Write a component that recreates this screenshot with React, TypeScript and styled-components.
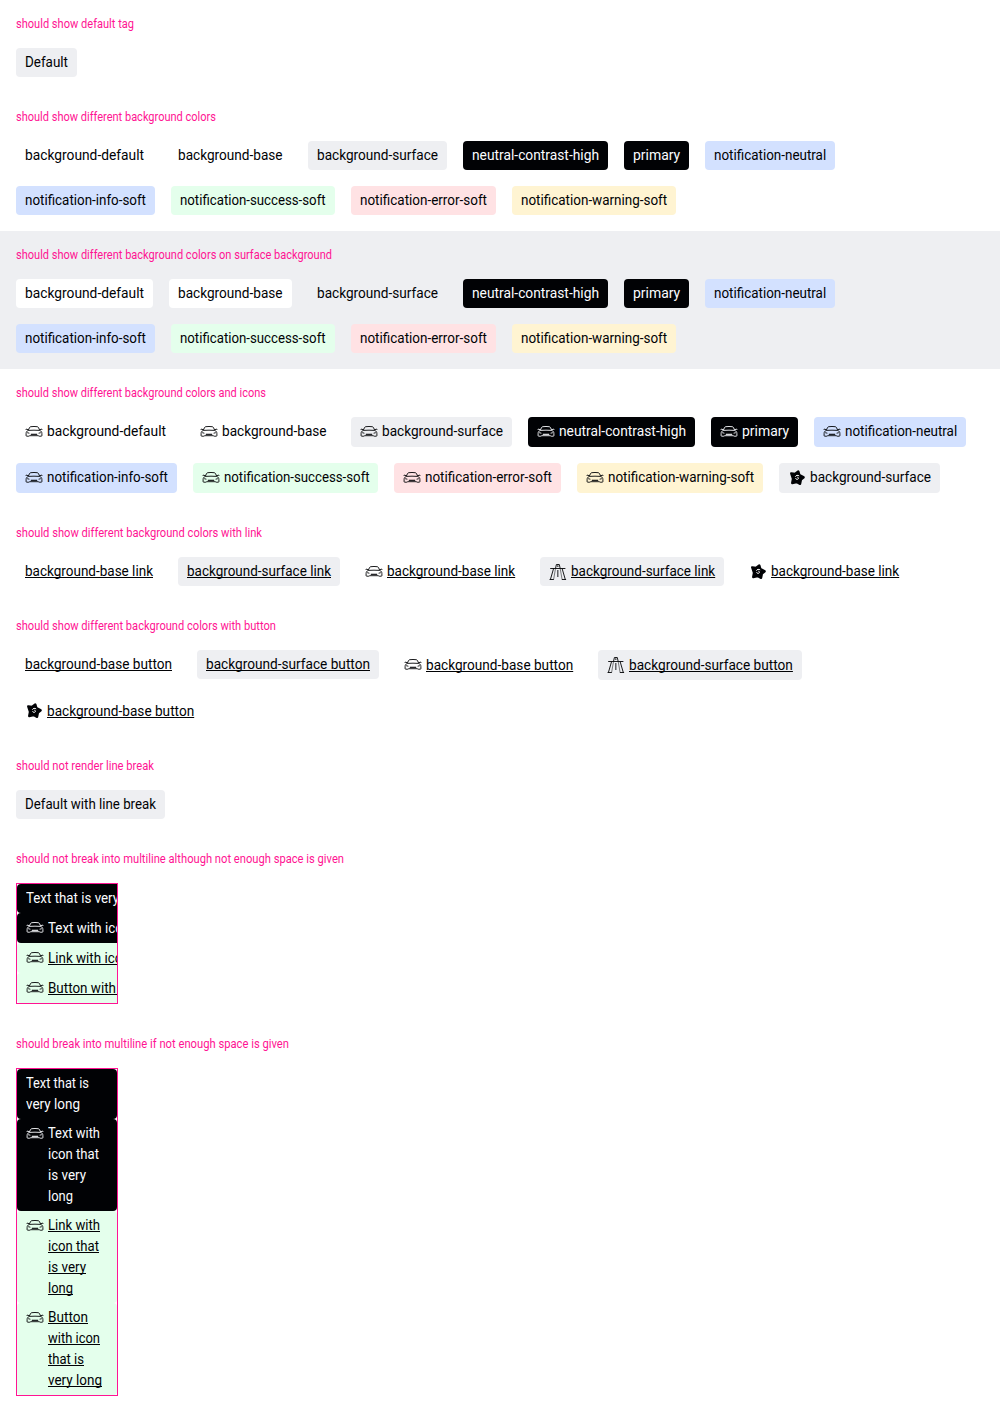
import React, { useLayoutEffect, useRef, useState } from 'react';
import styled, { createGlobalStyle, css } from 'styled-components';

const GlobalStyle = createGlobalStyle`
  body { margin: 0; background: #fff; color: #010205; font-family: Roboto, 'Liberation Sans', sans-serif; }
`;

type Color = 'default' | 'base' | 'surface' | 'dark' | 'info' | 'success' | 'error' | 'warning';

const colors: Record<Color, string> = {
  default: '#ffffff',
  base: '#ffffff',
  surface: '#eeeff2',
  dark: '#010205',
  info: '#d3e1ff',
  success: '#e4ffec',
  error: '#ffe2e4',
  warning: '#fff4d2',
};

const Section = styled.section<{ $surface?: boolean }>`
  display: flex;
  flex-direction: column;
  gap: 16px;
  padding: 16px;
  background: ${(p) => (p.$surface ? colors.surface : 'transparent')};
`;

const Heading = styled.h2`
  margin: 0;
  height: 16px;
  font-size: 13px;
  font-weight: 400;
  line-height: 16px;
  color: #ff1493;
`;

const Row = styled.div`
  display: flex;
  flex-wrap: wrap;
  align-items: flex-start;
  gap: 16px;
`;

type Fit = 'slim' | 'tall' | 'low';

const paddings: Record<Fit, string> = {
  slim: '4px 9px',
  tall: '4px 9px 5px',
  low: '5px 9px 4px',
};

const IconSvg = styled.svg`
  flex: none;
  width: 18px;
  height: 18px;
  margin-top: 2px;
`;

const TagBox = styled.span<{ $color: Color; $fit: Fit }>`
  display: flex;
  align-items: flex-start;
  gap: 3.8px;
  flex: none;
  box-sizing: border-box;
  padding: ${(p) => paddings[p.$fit]};
  border-radius: 4px;
  background: ${(p) => colors[p.$color]};
  color: ${(p) => (p.$color === 'dark' ? '#fbfcff' : '#010205')};
  font-size: 15px;
  line-height: 21px;

  ${IconSvg} {
    margin-top: ${(p) => (p.$fit === 'low' ? 1 : 2)}px;
  }
`;

const Lines = styled.span`
  display: flex;
  flex-direction: column;
`;

const Slot = styled.span`
  display: block;
  white-space: nowrap;
`;

const Glyphs = styled.span<{ $underline?: boolean }>`
  display: inline-block;
  vertical-align: top;
  transform-origin: 0 0;
  ${(p) =>
    p.$underline &&
    css`
      text-decoration: underline;
      text-decoration-thickness: 1px;
      text-decoration-skip-ink: none;
      text-underline-offset: 1px;
    `}
`;

const Frame = styled.div<{ $clip?: boolean }>`
  display: flex;
  flex-direction: column;
  align-items: ${(p) => (p.$clip ? 'flex-start' : 'stretch')};
  width: 100px;
  border: 1px solid #ff1493;
  overflow: hidden;
`;

function Condensed({ text, width, underline }: { text: string; width: number; underline?: boolean }) {
  const ref = useRef<HTMLSpanElement>(null);
  const [scale, setScale] = useState(1);
  useLayoutEffect(() => {
    if (ref.current) setScale(width / parseFloat(getComputedStyle(ref.current).width));
  }, [text, width]);
  return (
    <Slot style={{ width }}>
      <Glyphs ref={ref} $underline={underline} style={{ transform: `scaleX(${scale})` }}>
        {text}
      </Glyphs>
    </Slot>
  );
}

function Car() {
  return (
    <IconSvg viewBox="0 0 18 18" fill="none" stroke="currentColor" strokeWidth=".9">
      <path d="M3.2 7.5 4.5 4.6C4.8 4 5.200 3.800 5.800 3.700 7.800 3.400 10.200 3.400 12.200 3.700c.6.1 1 .3 1.300.9l1.300 2.900" />
      <path d="M.8 7c0-.6.3-.9.9-.8l1.700.6M17.200 7c0-.6-.3-.9-.9-.8l-1.700.6" />
      <path d="M3.400 7.400c3.500-.3 7.700-.3 11.200 0" />
      <path d="M3.300 7.400C1.800 8.100 1.100 9 1.100 10.600v1.900c0 .5.2.7.7.7h2l1-.5h8.400l1 .5h2c.5 0 .7-.2.7-.7v-1.900c0-1.600-.7-2.500-2.200-3.200" />
      <path d="M2.200 9.700l2.200.5M15.800 9.700l-2.200.5" />
      <path d="M5.800 11.300h6.400" strokeWidth="1.100" />
    </IconSvg>
  );
}

function Highway() {
  return (
    <IconSvg viewBox="0 0 18 18" fill="none" stroke="currentColor" strokeWidth=".9">
      <path d="M1.200 5.500h15.200M6.500 5.500l.9-4h2.900l.9 4M8.850 2.200v1.800" />
      <path d="M4.600 5.500 1.400 16.500M13.100 5.500l3.200 11" />
      <path d="M6.500 5.500 4.600 16.500M11.200 5.500l1.900 11" strokeWidth=".5" />
      <path d="M.6 16.500h4.200M12.900 16.500h4.200" />
      <path d="M8.850 7v7" />
    </IconSvg>
  );
}

function Flower() {
  return (
    <IconSvg viewBox="0 0 18 18" fill="currentColor">
      <path
        d="M3.200 4.300 7 5 10.300 2.400 11.400 6 15.700 8.300 12.900 10.700 12.100 14.900 8.600 13.100 4.200 14 5 9.800Z"
        stroke="currentColor"
        strokeWidth="2.300"
        strokeLinejoin="round"
      />
      <path d="M11.200 6.900c-1.400-1-3.200-.6-3.900.8" fill="none" stroke="#fff" strokeWidth="1" />
      <path d="M7.600 9.200c.3 1.300 1.800 1.600 2.600.7.600-.9.200-1.600-.8-1.700" fill="none" stroke="#fff" strokeWidth="1" />
    </IconSvg>
  );
}

type IconName = 'car' | 'highway' | 'flower';
const icons = { car: Car, highway: Highway, flower: Flower };

interface TagProps {
  color?: Color;
  icon?: IconName;
  underline?: boolean;
  fit?: Fit;
  lines: [string, number][];
}

function Tag({ color = 'surface', icon, underline, fit = 'slim', lines }: TagProps) {
  const Icon = icon && icons[icon];
  return (
    <TagBox $color={color} $fit={fit}>
      {Icon && <Icon />}
      <Lines>
        {lines.map(([text, width]) => (
          <Condensed key={text} text={text} width={width} underline={underline} />
        ))}
      </Lines>
    </TagBox>
  );
}

function Story({ title, width, surface, children }: { title: string; width: number; surface?: boolean; children: React.ReactNode }) {
  return (
    <Section $surface={surface}>
      <Heading>
        <Condensed text={title} width={width} />
      </Heading>
      {children}
    </Section>
  );
}

const palette: { color: Color; text: string; width: number }[] = [
  { color: 'default', text: 'background-default', width: 119 },
  { color: 'base', text: 'background-base', width: 104.6 },
  { color: 'surface', text: 'background-surface', width: 121 },
  { color: 'dark', text: 'neutral-contrast-high', width: 127 },
  { color: 'dark', text: 'primary', width: 47.2 },
  { color: 'info', text: 'notification-neutral', width: 112.2 },
  { color: 'info', text: 'notification-info-soft', width: 121 },
  { color: 'success', text: 'notification-success-soft', width: 145.6 },
  { color: 'error', text: 'notification-error-soft', width: 127 },
  { color: 'warning', text: 'notification-warning-soft', width: 146.2 },
];

const Palette = ({ icon }: { icon?: IconName }) => (
  <>
    {palette.map((p) => (
      <Tag key={p.text} color={p.color} icon={icon} fit={icon ? 'tall' : 'slim'} lines={[[p.text, p.width]]} />
    ))}
  </>
);

export default function App() {
  return (
    <>
      <GlobalStyle />
      <main>
        <Story title="should show default tag" width={118}>
          <Row>
            <Tag lines={[['Default', 43]]} />
          </Row>
        </Story>
        <Story title="should show different background colors" width={200}>
          <Row>
            <Palette />
          </Row>
        </Story>
        <Story title="should show different background colors on surface background" width={316} surface>
          <Row>
            <Palette />
          </Row>
        </Story>
        <Story title="should show different background colors and icons" width={250}>
          <Row>
            <Palette icon="car" />
            <Tag icon="flower" fit="tall" lines={[['background-surface', 121]]} />
          </Row>
        </Story>
        <Story title="should show different background colors with link" width={246}>
          <Row>
            <Tag color="base" underline lines={[['background-base link', 128]]} />
            <Tag underline lines={[['background-surface link', 144]]} />
            <Tag color="base" icon="car" underline lines={[['background-base link', 128.2]]} />
            <Tag icon="highway" underline lines={[['background-surface link', 144.2]]} />
            <Tag color="base" icon="flower" underline lines={[['background-base link', 128.2]]} />
          </Row>
        </Story>
        <Story title="should show different background colors with button" width={260}>
          <Row>
            <Tag color="base" underline lines={[['background-base button', 147]]} />
            <Tag underline lines={[['background-surface button', 164]]} />
            <Tag color="base" icon="car" fit="low" underline lines={[['background-base button', 147.2]]} />
            <Tag icon="highway" fit="low" underline lines={[['background-surface button', 163.9]]} />
            <Tag color="base" icon="flower" fit="low" underline lines={[['background-base button', 147.2]]} />
          </Row>
        </Story>
        <Story title="should not render line break" width={138}>
          <Row>
            <Tag lines={[['Default with line break', 131]]} />
          </Row>
        </Story>
        <Story title="should not break into multiline although not enough space is given" width={328}>
          <Frame $clip>
            <Tag color="dark" lines={[['Text that is very long', 122]]} />
            <Tag color="dark" icon="car" fit="low" lines={[['Text with icon that is very long', 179]]} />
            <Tag color="success" icon="car" fit="low" underline lines={[['Link with icon that is very long', 179]]} />
            <Tag color="success" icon="car" fit="low" underline lines={[['Button with icon that is very long', 194]]} />
          </Frame>
        </Story>
        <Story title="should break into multiline if not enough space is given" width={273}>
          <Frame>
            <Tag color="dark" lines={[['Text that is', 63], ['very long', 54]]} />
            <Tag color="dark" icon="car" lines={[['Text with', 52], ['icon that', 51], ['is very', 38], ['long', 25]]} />
            <Tag color="success" icon="car" underline lines={[['Link with', 52], ['icon that', 51], ['is very', 38], ['long', 25]]} />
            <Tag color="success" icon="car" underline lines={[['Button', 40], ['with icon', 52], ['that is', 36], ['very long', 54]]} />
          </Frame>
        </Story>
      </main>
    </>
  );
}
